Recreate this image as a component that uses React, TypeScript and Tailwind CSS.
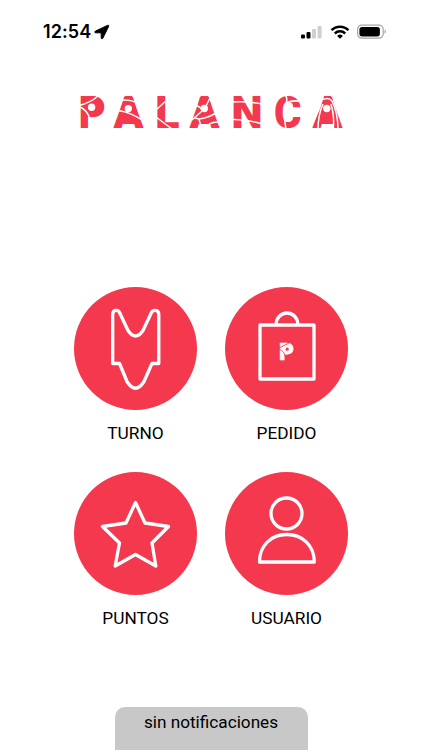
import type { ReactNode } from 'react';

const RED = '#f4384e';

function StatusBar() {
  return (
    <header className="flex h-16 w-full items-center justify-between pl-[43px] pr-[35px]">
      <div className="flex items-center gap-1">
        <span className="font-['Inter',sans-serif] text-[18px] font-semibold leading-6 tracking-[0.1px]">12:54</span>
        <svg width="16" height="16" viewBox="0 0 16 16" className="-ml-px">
          <path d="M13.700 1.300 1.300 7.200c-.8.4-.6 1.600.2 1.600H7.200v5.200c0 .9 1.200 1.200 1.600.3l5.900-12c.3-.6-.3-1.300-1-1Z" fill="black" stroke="black" strokeWidth="1" />
        </svg>
      </div>
      <div className="flex items-center gap-[7px]">
        <svg width="22" height="14" viewBox="0 0 22 14">
          <rect x="1" y="9.400" width="4" height="4.200" rx="1.100" />
          <rect x="6.500" y="6.900" width="4" height="6.700" rx="1.100" />
          <rect x="12" y="4" width="4" height="9.600" rx="1.100" fill="#cfcfcf" />
          <rect x="17.600" y="1" width="4" height="12.600" rx="1.100" fill="#cfcfcf" />
        </svg>
        <svg width="20" height="14" viewBox="0 0 20 14" fill="none" stroke="black" strokeWidth="2.500">
          <path d="M2.500 5.200a12 12 0 0 1 17 0" />
          <path d="M5.800 8.500a7.400 7.400 0 0 1 10.400 0" />
          <path d="M11 13.700 8.100 10.900a4.200 4.200 0 0 1 5.800 0Z" fill="black" stroke="none" />
        </svg>
        <svg width="31" height="16" viewBox="0 0 31 16">
          <rect x="1.600" y="1.200" width="25.600" height="13" rx="4.200" fill="none" stroke="#a5a5a5" strokeWidth="1.200" />
          <rect x="3.400" y="3" width="20.500" height="9.400" rx="2.600" />
          <path d="M28.600 5.600c1.800.7 1.800 3.600 0 4.300Z" fill="#a5a5a5" />
        </svg>
      </div>
    </header>
  );
}

const LETTERS = [
  { char: 'P', x: 78.6, width: 27.3 },
  { char: 'A', x: 113.5, width: 30 },
  { char: 'L', x: 155, width: 24.5 },
  { char: 'A', x: 189.500, width: 30 },
  { char: 'N', x: 231.2, width: 31.5 },
  { char: 'C', x: 274, width: 27.5 },
  { char: 'A', x: 312.500, width: 30 },
];

function Logo() {
  return (
    <svg width="270" height="64" viewBox="76 80 270 64" role="img" aria-label="PALANCA">
      <g className="font-['Roboto',sans-serif] text-[45px] font-black" fill={RED}>
        {LETTERS.map(({ char, x, width }) => (
          <text key={x} x={x} y="128.300" textLength={width} lengthAdjust="spacingAndGlyphs">
            {char}
          </text>
        ))}
      </g>
      <g fill={RED}>
        <path d="M86 98H94Q103 98.500 103 107T94 117H86Z" />
        <path d="M124 97H133L140 124H117ZM200 97H209L216 124H193ZM323 97H332L339 124H316Z" />
      </g>
      <g fill="white">
        <circle cx="91.600" cy="107.200" r="3.700" />
        <circle cx="128.300" cy="108.600" r="3.700" />
        <circle cx="204.300" cy="108.500" r="3.700" />
        <circle cx="326.800" cy="108.500" r="3.700" />
      </g>
      <g fill="none" stroke="white" strokeWidth="1.500">
        <path d="M79 105.500Q90 103 98 96M79 106.500Q88 110 90 120" />
        <path d="M119 100.500Q128 99 137 102.500M118 110.500Q131 112 145 122" />
        <path d="M156 110 168 99M156 117 172 129" />
        <path d="M206 106 210 98M202 110Q200 106 196 106M202 111 192 120M195 118 199 119 202 130M199 119Q208 118 216 113M209 124Q214 121.500 220 122" />
        <path d="M232 102Q248 101 262 104M232 119.500Q247 119 262 124" />
        <path d="M285 94Q288 99 286 103Q283 111 286 130M285 104Q292 99 302 102" />
        <path d="M313 123Q320 109 324 94M320 101Q328 96 332 101Q338 113 338 130M318 130Q318 115 323 104M331 104Q335 118 333 130" />
      </g>
    </svg>
  );
}

function Tile({ label, children }: { label: string; children: ReactNode }) {
  return (
    <button className="flex w-[123px] flex-col items-center">
      <span className="flex size-[123px] items-center justify-center rounded-full bg-[#f4384e]">
        <svg width="123" height="123" viewBox="0 0 123 123" fill="none" stroke="white" strokeWidth="3.300" strokeLinejoin="round">
          {children}
        </svg>
      </span>
      <span className="mt-[11px] text-[17.300px] leading-6">{label}</span>
    </button>
  );
}

export default function App() {
  return (
    <main className="flex h-[750px] w-full flex-col items-center overflow-hidden bg-white font-['Roboto',sans-serif] text-black">
      <StatusBar />
      <div className="mt-4">
        <Logo />
      </div>
      <div className="mt-[143px] grid grid-cols-2 gap-x-7 gap-y-[26.500px]">
        <Tile label="TURNO">
          <path d="M38.700 76.500V27.500C38.700 22.600 44.300 22 46 26.500L54 43.500Q61.500 54.500 69 43.500L77 26.500C78.700 22 84.800 22.600 84.800 27.500V76.500H78L70 94.500Q61.500 108 53 94.500L45.500 76.500Z" />
        </Tile>
        <Tile label="PEDIDO">
          <path d="M35 38H89V92H35ZM51.200 38V37a10.800 11 0 0 1 21.600 0V38" />
          <text x="54" y="73" fill="white" stroke="white" strokeWidth="0.500" className="text-[23px] font-black">P</text>
          <circle cx="62.200" cy="62.200" r="3.500" fill="white" stroke="none" />
          <circle cx="62.200" cy="62.200" r="1.600" fill={RED} stroke="none" />
          <path d="M54 61 64 56M54 62Q60 64 61 73" stroke={RED} strokeWidth="0.900" />
        </Tile>
        <Tile label="PUNTOS">
          <path d="M61.500 30.500 71 51 94.500 54.500 78 71 81.800 94 61.500 82.500 41.200 94 45.500 71 28.500 54.500 52 51Z" />
        </Tile>
        <Tile label="USUARIO">
          <circle cx="61.500" cy="41.500" r="15.500" />
          <path d="M34.500 90C34.500 73.500 46 62.500 61.800 62.500S89.300 73.500 89.300 90Z" />
        </Tile>
      </div>
      <aside className="mt-auto flex h-[43.500px] w-[193px] justify-center rounded-t-[10px] bg-[#c8c8c8] pt-[3px] text-[17.200px] leading-6">
        sin notificaciones
      </aside>
    </main>
  );
}
